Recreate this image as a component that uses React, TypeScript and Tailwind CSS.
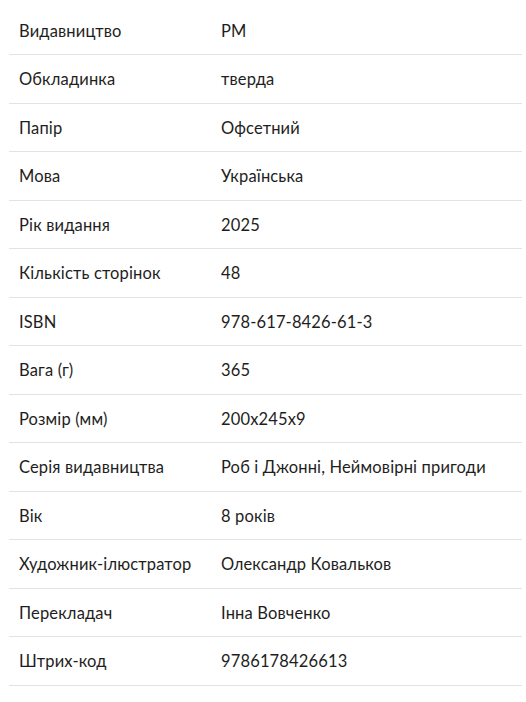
import React from "react";

const rows: [string, string][] = [
  ["Видавництво", "РМ"],
  ["Обкладинка", "тверда"],
  ["Папір", "Офсетний"],
  ["Мова", "Українська"],
  ["Рік видання", "2025"],
  ["Кількість сторінок", "48"],
  ["ISBN", "978-617-8426-61-3"],
  ["Вага (г)", "365"],
  ["Розмір (мм)", "200x245x9"],
  ["Серія видавництва", "Роб і Джонні, Неймовірні пригоди"],
  ["Вік", "8 років"],
  ["Художник-ілюстратор", "Олександр Ковальков"],
  ["Перекладач", "Інна Вовченко"],
  ["Штрих-код", "9786178426613"],
];

export default function App() {
  return (
    <div className="w-[526px] h-[702px] bg-white pt-[6.5px] pl-[9px]" style={{ fontFamily: "Lato, 'Noto Sans', sans-serif" }}>
      <div className="w-[513px]">
        {rows.map(([k, v]) => (
          <div key={k} className="flex items-center h-[48.5px] pt-[2px] border-b border-[#e2e2e8] text-[16.5px] tracking-[0.15px] text-[#1e1e22]">
            <div className="w-[212px] pl-[10px] shrink-0">{k}</div>
            <div className="flex-1">{v}</div>
          </div>
        ))}
      </div>
    </div>
  );
}
